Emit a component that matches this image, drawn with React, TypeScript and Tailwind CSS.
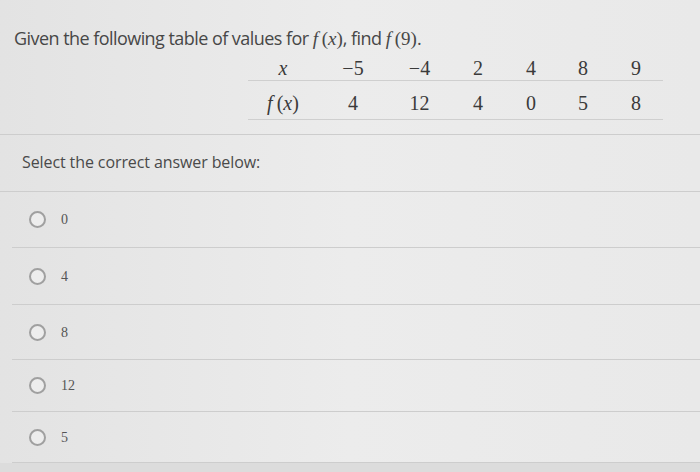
import React from "react";

const xs = ["−5", "−4", "2", "4", "8", "9"];
const fx = ["4", "12", "4", "0", "5", "8"];
const answers = [
  { label: "0", h: "h-[56px]" },
  { label: "4", h: "h-[57px]" },
  { label: "8", h: "h-[55px]" },
  { label: "12", h: "h-[52px]" },
  { label: "5", h: "h-[51px]" },
];

const cols = "grid grid-cols-[70px_70px_63px_54px_52px_52px_54px]";

const App = () => {
  return (
    <div className="w-[700px] h-[472px] overflow-hidden bg-gradient-to-r from-[#e3e3e3] via-[#ececec] to-[#e9e9e9] font-['Open_Sans',sans-serif] text-[#474747]">
      <div className="h-[135px] border-b border-[#cdcdcd] pt-[26px]">
        <p className="pl-[14px] text-[18px] tracking-[-0.55px] leading-[24px]">
          Given the following table of values for{" "}
          <span className="font-['Liberation_Serif',serif] text-[19px] tracking-normal">
            <i>f</i>&thinsp;(<i>x</i>)
          </span>
          , find{" "}
          <span className="font-['Liberation_Serif',serif] text-[19px] tracking-normal">
            <i>f</i>&thinsp;(9)
          </span>
          .
        </p>
        <div className="ml-[248px] mt-[2px] w-[415px] font-['Liberation_Serif',serif] text-[20px] text-[#3a3a3a]">
          <div className={`${cols} h-[28px] items-center border-b border-[#cfcfcf] text-center`}>
            <span className="italic">x</span>
            {xs.map((v, i) => (
              <span key={i}>{v}</span>
            ))}
          </div>
          <div className={`${cols} h-[39px] items-center border-b border-[#cfcfcf] pt-[5px] text-center`}>
            <span>
              <i>f</i>&thinsp;(<i>x</i>)
            </span>
            {fx.map((v, i) => (
              <span key={i}>{v}</span>
            ))}
          </div>
        </div>
      </div>

      <div className="h-[57px] border-b border-[#cdcdcd] pl-[22px] pt-[16px] text-[16px] tracking-[-0.1px] leading-[22px] text-[#4a4a4a]">
        Select the correct answer below:
      </div>

      {answers.map((a) => (
        <div
          key={a.label}
          className={`${a.h} ml-[12px] flex items-center border-b border-[#cdcdcd] pl-[17px]`}
        >
          <span className="h-[17px] w-[17px] rounded-full border-2 border-[#a0a0a0] bg-[#ededed]" />
          <span className="ml-[15px] font-['Liberation_Serif',serif] text-[14px] text-[#555]">
            {a.label}
          </span>
        </div>
      ))}
      <div className="h-[20px] bg-[#dcdcdc]" />
    </div>
  );
};

export default App;
